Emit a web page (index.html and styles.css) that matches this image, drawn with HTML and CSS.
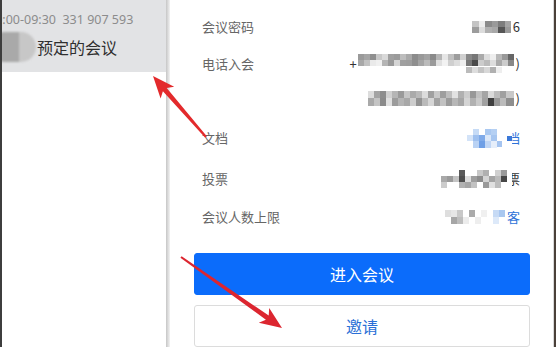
FILE: index.html
```html
<!DOCTYPE html>
<html lang="zh-CN">
<head>
<meta charset="utf-8">
<title>会议详情</title>
<link rel="stylesheet" href="styles.css">
</head>
<body>
<div class="app">
  <aside class="sidebar">
    <div class="meeting">
      <div class="meeting-meta">09:00-09:30&nbsp;&nbsp;331 907 593</div>
      <div class="meeting-title-row">
        <span class="avatar"></span>
        <span class="meeting-title">预定的会议</span>
      </div>
    </div>
  </aside>
  <div class="divider"></div>
  <main class="panel">
    <div class="rows">
      <div class="row">
        <span class="label">会议密码</span>
        <span class="value">
          <svg class="mosaic" width="39" height="12" viewBox="0 0 39 12" shape-rendering="crispEdges">
            <rect x="0" y="0" width="7" height="6" fill="#c4c4c4"/><rect x="7" y="0" width="6" height="6" fill="#ededed"/><rect x="13" y="0" width="7" height="6" fill="#8a8a8a"/><rect x="20" y="0" width="6" height="6" fill="#9a9a9a"/><rect x="26" y="0" width="7" height="6" fill="#7d7d7d"/><rect x="33" y="0" width="6" height="6" fill="#a5a5a5"/>
            <rect x="0" y="6" width="7" height="6" fill="#9c9c9c"/><rect x="7" y="6" width="6" height="6" fill="#dcdcdc"/><rect x="13" y="6" width="7" height="6" fill="#b0b0b0"/><rect x="20" y="6" width="6" height="6" fill="#a8a8a8"/><rect x="26" y="6" width="7" height="6" fill="#555555"/><rect x="33" y="6" width="6" height="6" fill="#9a9a9a"/>
          </svg><span class="txt">6</span>
        </span>
      </div>
      <div class="row short">
        <span class="label">电话入会</span>
        <span class="value">
          <span class="txt plus">+</span>
          <svg class="mosaic" width="156" height="19" viewBox="0 0 156 19" shape-rendering="crispEdges">
            <g>
              <rect x="0" y="0" width="6" height="6" fill="#9a9a9a"/><rect x="6" y="0" width="6" height="6" fill="#a5a5a5"/><rect x="12" y="0" width="6" height="6" fill="#8f8f8f"/><rect x="18" y="0" width="6" height="6" fill="#c8c8c8"/><rect x="24" y="0" width="6" height="6" fill="#d9d9d9"/><rect x="30" y="0" width="6" height="6" fill="#a0a0a0"/><rect x="36" y="0" width="6" height="6" fill="#9b9b9b"/><rect x="42" y="0" width="6" height="6" fill="#bdbdbd"/><rect x="48" y="0" width="6" height="6" fill="#a9a9a9"/><rect x="54" y="0" width="6" height="6" fill="#8c8c8c"/><rect x="60" y="0" width="6" height="6" fill="#999999"/><rect x="66" y="0" width="6" height="6" fill="#a3a3a3"/><rect x="72" y="0" width="6" height="6" fill="#8a8a8a"/><rect x="78" y="0" width="6" height="6" fill="#b5b5b5"/><rect x="84" y="0" width="6" height="6" fill="#e6e6e6"/><rect x="90" y="0" width="6" height="6" fill="#c0c0c0"/><rect x="96" y="0" width="6" height="6" fill="#9d9d9d"/><rect x="102" y="0" width="6" height="6" fill="#d0d0d0"/><rect x="108" y="0" width="6" height="6" fill="#888888"/><rect x="114" y="0" width="6" height="6" fill="#777777"/><rect x="120" y="0" width="6" height="6" fill="#aaaaaa"/><rect x="126" y="0" width="6" height="6" fill="#dddddd"/><rect x="132" y="0" width="6" height="6" fill="#eeeeee"/><rect x="138" y="0" width="6" height="6" fill="#b8b8b8"/><rect x="144" y="0" width="6" height="6" fill="#999999"/><rect x="150" y="0" width="6" height="6" fill="#666666"/>
            </g>
            <g>
              <rect x="0" y="6" width="6" height="6" fill="#a8a8a8"/><rect x="6" y="6" width="6" height="6" fill="#c2c2c2"/><rect x="12" y="6" width="6" height="6" fill="#eaeaea"/><rect x="18" y="6" width="6" height="6" fill="#f0f0f0"/><rect x="24" y="6" width="6" height="6" fill="#b5b5b5"/><rect x="30" y="6" width="6" height="6" fill="#9a9a9a"/><rect x="36" y="6" width="6" height="6" fill="#d5d5d5"/><rect x="42" y="6" width="6" height="6" fill="#a0a0a0"/><rect x="48" y="6" width="6" height="6" fill="#9e9e9e"/><rect x="54" y="6" width="6" height="6" fill="#8f8f8f"/><rect x="60" y="6" width="6" height="6" fill="#a5a5a5"/><rect x="66" y="6" width="6" height="6" fill="#bbbbbb"/><rect x="72" y="6" width="6" height="6" fill="#9a9a9a"/><rect x="78" y="6" width="6" height="6" fill="#e0e0e0"/><rect x="84" y="6" width="6" height="6" fill="#f2f2f2"/><rect x="90" y="6" width="6" height="6" fill="#cfcfcf"/><rect x="96" y="6" width="6" height="6" fill="#dddddd"/><rect x="102" y="6" width="6" height="6" fill="#eeeeee"/><rect x="108" y="6" width="6" height="6" fill="#777777"/><rect x="114" y="6" width="6" height="6" fill="#4a4a4a"/><rect x="120" y="6" width="6" height="6" fill="#cccccc"/><rect x="126" y="6" width="6" height="6" fill="#bbbbbb"/><rect x="132" y="6" width="6" height="6" fill="#dddddd"/><rect x="138" y="6" width="6" height="6" fill="#aaaaaa"/><rect x="144" y="6" width="6" height="6" fill="#cccccc"/><rect x="150" y="6" width="6" height="6" fill="#888888"/>
            </g>
            <g>
              <rect x="108" y="13" width="6" height="6" fill="#bbbbbb"/><rect x="114" y="13" width="6" height="6" fill="#dddddd"/><rect x="120" y="13" width="6" height="6" fill="#c4c4c4"/><rect x="126" y="13" width="6" height="6" fill="#d8d8d8"/><rect x="132" y="13" width="6" height="6" fill="#b0b0b0"/><rect x="138" y="13" width="6" height="6" fill="#eeeeee"/>
            </g>
          </svg><span class="txt">)</span>
        </span>
      </div>
      <div class="row short">
        <span class="label"></span>
        <span class="value">
          <svg class="mosaic" width="146" height="15" viewBox="0 0 146 15" shape-rendering="crispEdges">
            <g>
              <rect x="0" y="0" width="6" height="7" fill="#dddddd"/><rect x="6" y="0" width="6" height="7" fill="#a4a4a4"/><rect x="12" y="0" width="6" height="7" fill="#8d8d8d"/><rect x="18" y="0" width="6" height="7" fill="#d0d0d0"/><rect x="24" y="0" width="6" height="7" fill="#b5b5b5"/><rect x="30" y="0" width="6" height="7" fill="#9a9a9a"/><rect x="36" y="0" width="6" height="7" fill="#c6c6c6"/><rect x="42" y="0" width="6" height="7" fill="#aaaaaa"/><rect x="48" y="0" width="6" height="7" fill="#b9b9b9"/><rect x="54" y="0" width="6" height="7" fill="#dcdcdc"/><rect x="60" y="0" width="6" height="7" fill="#a0a0a0"/><rect x="66" y="0" width="6" height="7" fill="#c8c8c8"/><rect x="72" y="0" width="6" height="7" fill="#9e9e9e"/><rect x="78" y="0" width="6" height="7" fill="#bdbdbd"/><rect x="84" y="0" width="6" height="7" fill="#e2e2e2"/><rect x="90" y="0" width="6" height="7" fill="#b0b0b0"/><rect x="96" y="0" width="6" height="7" fill="#cccccc"/><rect x="102" y="0" width="6" height="7" fill="#989898"/><rect x="108" y="0" width="6" height="7" fill="#c0c0c0"/><rect x="114" y="0" width="6" height="7" fill="#a5a5a5"/><rect x="120" y="0" width="6" height="7" fill="#dadada"/><rect x="126" y="0" width="6" height="7" fill="#bcbcbc"/><rect x="132" y="0" width="6" height="7" fill="#a0a0a0"/><rect x="138" y="0" width="8" height="7" fill="#c8c8c8"/>
            </g>
            <g>
              <rect x="0" y="7" width="6" height="8" fill="#a9a9a9"/><rect x="6" y="7" width="6" height="8" fill="#c4c4c4"/><rect x="12" y="7" width="6" height="8" fill="#8a8a8a"/><rect x="18" y="7" width="6" height="8" fill="#e0e0e0"/><rect x="24" y="7" width="6" height="8" fill="#9c9c9c"/><rect x="30" y="7" width="6" height="8" fill="#b4b4b4"/><rect x="36" y="7" width="6" height="8" fill="#a8a8a8"/><rect x="42" y="7" width="6" height="8" fill="#cdcdcd"/><rect x="48" y="7" width="6" height="8" fill="#939393"/><rect x="54" y="7" width="6" height="8" fill="#bababa"/><rect x="60" y="7" width="6" height="8" fill="#d6d6d6"/><rect x="66" y="7" width="6" height="8" fill="#a2a2a2"/><rect x="72" y="7" width="6" height="8" fill="#c2c2c2"/><rect x="78" y="7" width="6" height="8" fill="#9b9b9b"/><rect x="84" y="7" width="6" height="8" fill="#b7b7b7"/><rect x="90" y="7" width="6" height="8" fill="#a6a6a6"/><rect x="96" y="7" width="6" height="8" fill="#d4d4d4"/><rect x="102" y="7" width="6" height="8" fill="#b1b1b1"/><rect x="108" y="7" width="6" height="8" fill="#c9c9c9"/><rect x="114" y="7" width="6" height="8" fill="#a1a1a1"/><rect x="120" y="7" width="6" height="8" fill="#3f3f3f"/><rect x="126" y="7" width="6" height="8" fill="#999999"/><rect x="132" y="7" width="6" height="8" fill="#bbbbbb"/><rect x="138" y="7" width="8" height="8" fill="#8e8e8e"/>
            </g>
          </svg><span class="txt">)</span>
        </span>
      </div>
      <div class="row tall">
        <span class="label">文档</span>
        <span class="value link">
          <svg class="mosaic cover" width="45" height="19" viewBox="0 0 45 19" shape-rendering="crispEdges">
            <rect x="0" y="0" width="45" height="19" fill="#ffffff"/>
            <rect x="6" y="0" width="6" height="6" fill="#c6dbf6"/><rect x="18" y="0" width="6" height="6" fill="#a9c8f1"/><rect x="24" y="0" width="6" height="6" fill="#b5d0f3"/>
            <rect x="0" y="6" width="6" height="6" fill="#d3e3f8"/><rect x="6" y="6" width="6" height="6" fill="#9ec0ef"/><rect x="12" y="6" width="6" height="6" fill="#7eaae9"/><rect x="18" y="6" width="6" height="6" fill="#dbe8f9"/><rect x="24" y="6" width="6" height="6" fill="#a7c6f0"/>
            <rect x="6" y="12" width="6" height="7" fill="#b9d2f4"/><rect x="12" y="12" width="6" height="7" fill="#6e9fe6"/><rect x="18" y="12" width="6" height="7" fill="#c0d6f5"/><rect x="24" y="12" width="6" height="7" fill="#e6eefa"/><rect x="30" y="12" width="5" height="6" fill="#a5c4f0"/>
            <rect x="40" y="7" width="5" height="5" fill="#3a78d8"/>
          </svg><span class="txt">档</span>
        </span>
      </div>
      <div class="row">
        <span class="label">投票</span>
        <span class="value">
          <svg class="mosaic cover" width="71" height="18" viewBox="0 0 71 18" shape-rendering="crispEdges">
            <rect x="0" y="0" width="71" height="18" fill="#ffffff"/>
            <rect x="18" y="0" width="6" height="6" fill="#5a5a5a"/><rect x="36" y="0" width="6" height="6" fill="#c8c8c8"/><rect x="42" y="0" width="6" height="6" fill="#b0b0b0"/><rect x="54" y="0" width="6" height="6" fill="#d0d0d0"/><rect x="60" y="0" width="6" height="6" fill="#9a9a9a"/>
            <rect x="0" y="6" width="6" height="6" fill="#a9a9a9"/><rect x="6" y="6" width="6" height="6" fill="#9a9a9a"/><rect x="12" y="6" width="6" height="6" fill="#c4c4c4"/><rect x="18" y="6" width="6" height="6" fill="#4e4e4e"/><rect x="24" y="6" width="6" height="6" fill="#dddddd"/><rect x="30" y="6" width="6" height="6" fill="#9e9e9e"/><rect x="36" y="6" width="6" height="6" fill="#8c8c8c"/><rect x="42" y="6" width="6" height="6" fill="#d4d4d4"/><rect x="48" y="6" width="6" height="6" fill="#a4a4a4"/><rect x="54" y="6" width="6" height="6" fill="#bbbbbb"/><rect x="60" y="6" width="6" height="6" fill="#474747"/>
            <rect x="0" y="12" width="6" height="6" fill="#cccccc"/><rect x="18" y="12" width="6" height="6" fill="#b2b2b2"/><rect x="24" y="12" width="6" height="6" fill="#a6a6a6"/><rect x="30" y="12" width="6" height="6" fill="#c2c2c2"/><rect x="42" y="12" width="6" height="6" fill="#9a9a9a"/><rect x="48" y="12" width="6" height="6" fill="#e0e0e0"/><rect x="54" y="12" width="6" height="6" fill="#bdbdbd"/>
          </svg><span class="txt">票</span>
        </span>
      </div>
      <div class="row">
        <span class="label">会议人数上限</span>
        <span class="value link">
          <svg class="mosaic" width="60" height="14" viewBox="0 0 60 14" shape-rendering="crispEdges">
            <rect x="0" y="0" width="6" height="7" fill="#dedede"/><rect x="6" y="0" width="6" height="7" fill="#e6e6e6"/><rect x="12" y="0" width="6" height="7" fill="#c8c8c8"/><rect x="24" y="0" width="6" height="7" fill="#aaaaaa"/><rect x="36" y="0" width="6" height="7" fill="#f0f0f0"/><rect x="48" y="0" width="6" height="7" fill="#c6daf5"/><rect x="54" y="0" width="6" height="7" fill="#a9c7f0"/>
            <rect x="6" y="7" width="6" height="7" fill="#a6a6a6"/><rect x="12" y="7" width="6" height="7" fill="#bdbdbd"/><rect x="18" y="7" width="6" height="7" fill="#ececec"/><rect x="30" y="7" width="6" height="7" fill="#eeeeee"/><rect x="48" y="7" width="6" height="7" fill="#dde9f9"/>
          </svg><span class="txt">客</span>
        </span>
      </div>
    </div>
    <div class="actions">
      <button class="btn btn-primary" type="button">进入会议</button>
      <button class="btn btn-secondary" type="button">邀请</button>
    </div>
  </main>
  <div class="edge"></div>
</div>
<svg class="arrows" width="556" height="347" viewBox="0 0 556 347">
  <polygon fill="#e32a2c" points="153,76 174.2,86.7 166.7,88 206.8,136.3 205.2,137.7 162.9,91.2 160.6,98.5"/>
  <polygon fill="#dc2630" points="282,328 258.8,322.7 265.9,319.7 180.4,257.8 181.6,256.2 268.7,315.6 269.2,308"/>
</svg>
</body>
</html>
```

FILE: styles.css
```css
* {
  box-sizing: border-box;
}

html, body {
  margin: 0;
  padding: 0;
}

body {
  width: 556px;
  height: 347px;
  overflow: hidden;
  background: #ffffff;
  font-family: "Noto Sans CJK SC", "Noto Sans", sans-serif;
  position: relative;
}

.app {
  display: flex;
  height: 347px;
}

/* ---------- sidebar ---------- */
.sidebar {
  width: 166px;
  flex: none;
  border-left: 2px solid #3d3d3d;
  background: #ffffff;
  overflow: hidden;
}

.meeting {
  height: 72px;
  background: #e2e3e5;
  padding-top: 12px;
}

.meeting-meta {
  margin-left: -14px;
  font-family: "Noto Sans", "Noto Sans CJK SC", sans-serif;
  font-size: 12.5px;
  line-height: 16px;
  color: #8c8c8c;
  white-space: nowrap;
}

.meeting-title-row {
  display: flex;
  align-items: center;
  height: 30px;
  margin-top: 4px;
}

.avatar {
  width: 46px;
  height: 30px;
  margin-left: -12px;
  border-radius: 15px;
  background: linear-gradient(90deg, #a9a9a9 0 62%, #c7c7c7 62% 100%);
  filter: blur(0.8px);
  flex: none;
}

.meeting-title {
  margin-left: 1px;
  font-size: 16px;
  line-height: 20px;
  color: #2f2f2f;
}

/* ---------- divider ---------- */
.divider {
  width: 4px;
  flex: none;
  background: linear-gradient(90deg, #c6c6c6, #dcdcdc 50%, #f3f3f3);
}

/* ---------- main panel ---------- */
.panel {
  flex: 1;
  background: #ffffff;
  padding-top: 8px;
  display: flex;
  flex-direction: column;
}

.rows {
  padding: 0 33px 0 32px;
}

.row {
  height: 38px;
  display: flex;
  align-items: center;
  justify-content: space-between;
}

.row.short {
  height: 35px;
}

.row.tall {
  height: 44px;
}

.label {
  font-size: 13px;
  color: #666666;
  line-height: 18px;
}

.value {
  display: flex;
  align-items: center;
  font-size: 13px;
  color: #333333;
  line-height: 18px;
}

.value.link {
  color: #2f73d9;
}

.mosaic {
  display: block;
  flex: none;
}

.mosaic.cover {
  position: relative;
  z-index: 1;
  margin-right: -7px;
}

.txt {
  margin-left: 2px;
}

.txt.plus {
  margin-right: 1px;
  margin-left: 0;
}

/* ---------- buttons ---------- */
.actions {
  display: flex;
  flex-direction: column;
  gap: 10px;
  padding: 0 23px 0 24px;
  margin-top: 17px;
}

.btn {
  height: 42px;
  border-radius: 3px;
  font-family: "Noto Sans CJK SC", sans-serif;
  font-size: 16px;
  cursor: pointer;
}

.btn-primary {
  background: #0b6cfb;
  border: 1px solid #0b6cfb;
  color: #ffffff;
}

.btn-secondary {
  background: #ffffff;
  border: 1px solid #dcdcdc;
  color: #2a6fd6;
}

/* ---------- right edge ---------- */
.edge {
  width: 3px;
  flex: none;
  background: linear-gradient(90deg, #d8d8d8 0 1px, #4a4039 1px 3px);
}

/* ---------- annotation arrows ---------- */
.arrows {
  position: absolute;
  left: 0;
  top: 0;
  pointer-events: none;
}
```
